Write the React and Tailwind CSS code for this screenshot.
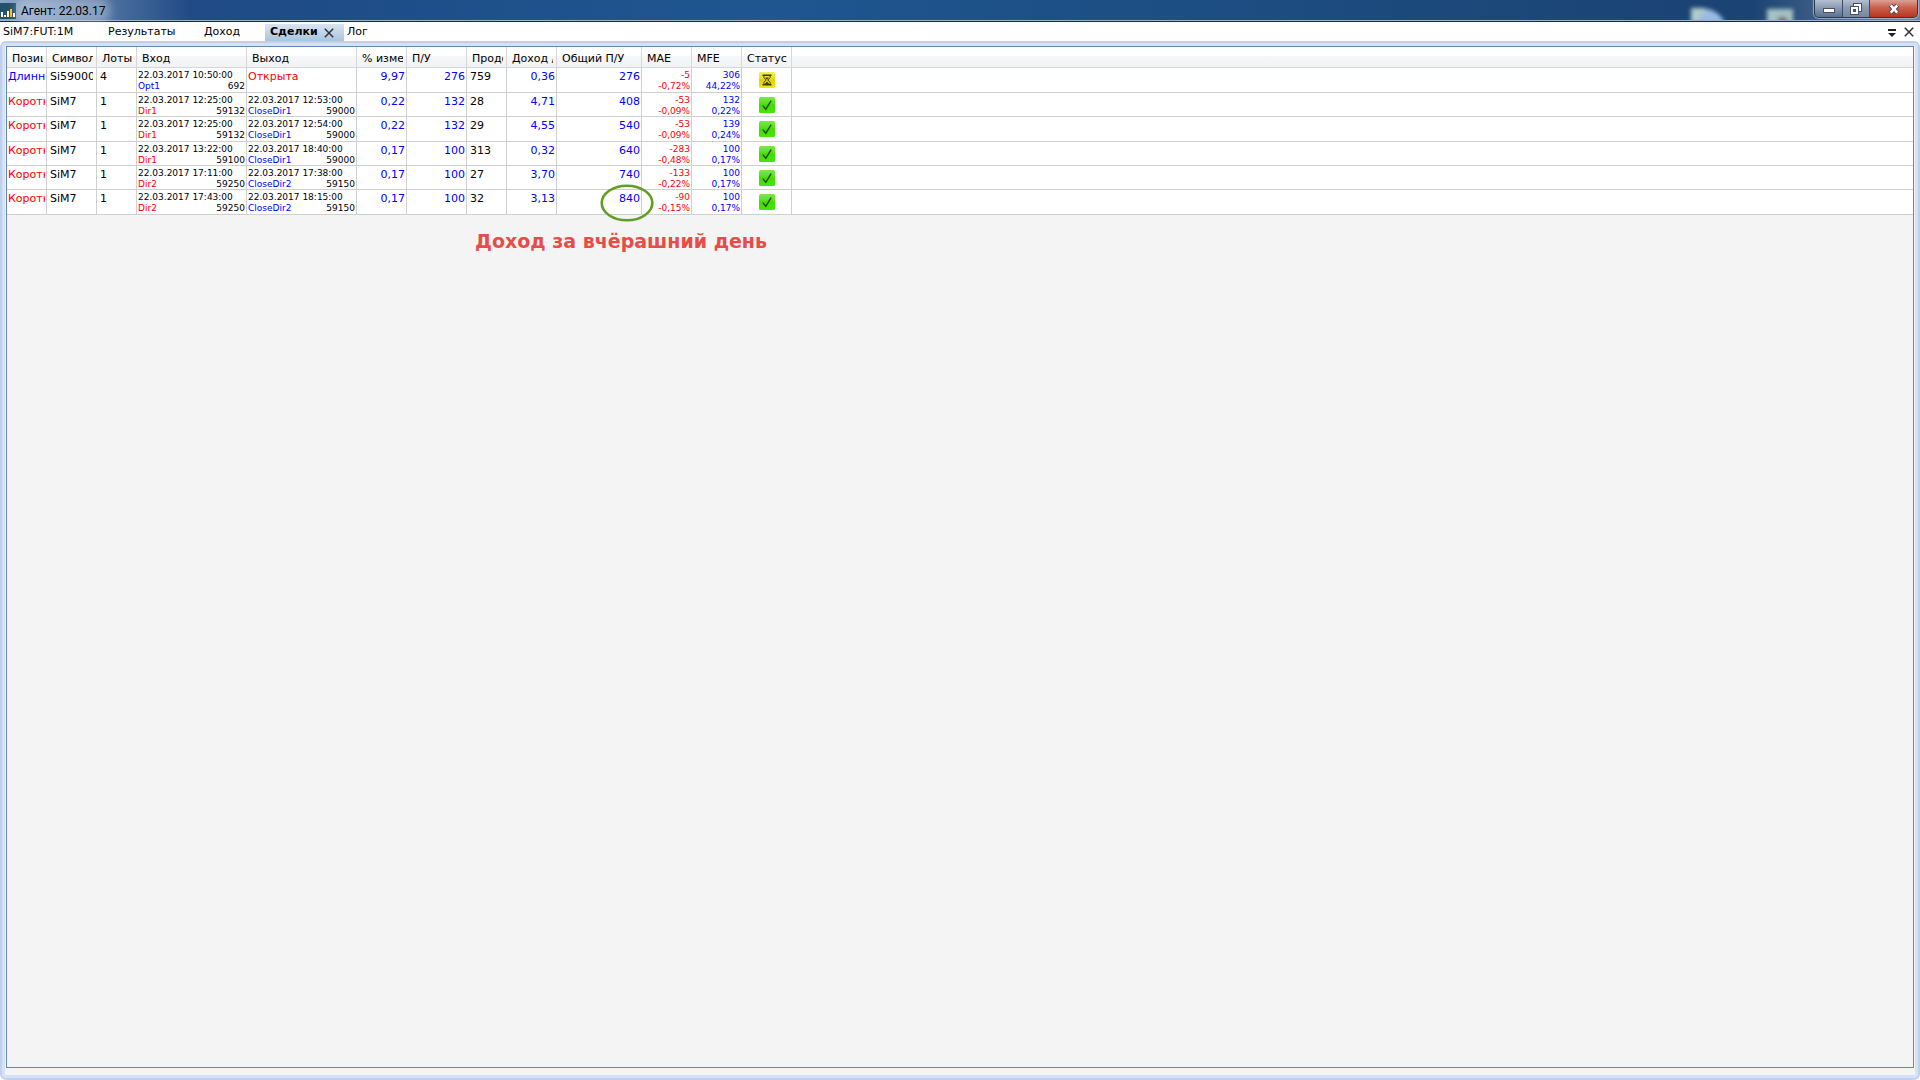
const COLUMNS = [
  { name: "Позиция", width: "w-[40px]" },
  { name: "Символ", width: "w-[50px]" },
  { name: "Лоты", width: "w-[40px]" },
  { name: "Вход", width: "w-[110px]" },
  { name: "Выход", width: "w-[110px]" },
  { name: "% изменения", width: "w-[50px]" },
  { name: "П/У", width: "w-[60px]" },
  { name: "Продолжительность", width: "w-[40px]" },
  { name: "Доход / бар", width: "w-[50px]" },
  { name: "Общий П/У", width: "w-[85px]" },
  { name: "MAE", width: "w-[50px]" },
  { name: "MFE", width: "w-[50px]" },
  { name: "Статус", width: "w-[50px]" },
];

const TRADES = [
  {
    long: true,
    symbol: "Si59000",
    lots: 4,
    entry: { time: "22.03.2017 10:50:00", signal: "Opt1", price: 692 },
    exit: null,
    change: "9,97",
    profit: 276,
    bars: 759,
    perBar: "0,36",
    total: 276,
    mae: [-5, "-0,72%"],
    mfe: [306, "44,22%"],
  },
  {
    symbol: "SiM7",
    lots: 1,
    entry: { time: "22.03.2017 12:25:00", signal: "Dir1", price: 59132 },
    exit: { time: "22.03.2017 12:53:00", signal: "CloseDir1", price: 59000 },
    change: "0,22",
    profit: 132,
    bars: 28,
    perBar: "4,71",
    total: 408,
    mae: [-53, "-0,09%"],
    mfe: [132, "0,22%"],
  },
  {
    symbol: "SiM7",
    lots: 1,
    entry: { time: "22.03.2017 12:25:00", signal: "Dir1", price: 59132 },
    exit: { time: "22.03.2017 12:54:00", signal: "CloseDir1", price: 59000 },
    change: "0,22",
    profit: 132,
    bars: 29,
    perBar: "4,55",
    total: 540,
    mae: [-53, "-0,09%"],
    mfe: [139, "0,24%"],
  },
  {
    symbol: "SiM7",
    lots: 1,
    entry: { time: "22.03.2017 13:22:00", signal: "Dir1", price: 59100 },
    exit: { time: "22.03.2017 18:40:00", signal: "CloseDir1", price: 59000 },
    change: "0,17",
    profit: 100,
    bars: 313,
    perBar: "0,32",
    total: 640,
    mae: [-283, "-0,48%"],
    mfe: [100, "0,17%"],
  },
  {
    symbol: "SiM7",
    lots: 1,
    entry: { time: "22.03.2017 17:11:00", signal: "Dir2", price: 59250 },
    exit: { time: "22.03.2017 17:38:00", signal: "CloseDir2", price: 59150 },
    change: "0,17",
    profit: 100,
    bars: 27,
    perBar: "3,70",
    total: 740,
    mae: [-133, "-0,22%"],
    mfe: [100, "0,17%"],
  },
  {
    symbol: "SiM7",
    lots: 1,
    entry: { time: "22.03.2017 17:43:00", signal: "Dir2", price: 59250 },
    exit: { time: "22.03.2017 18:15:00", signal: "CloseDir2", price: 59150 },
    change: "0,17",
    profit: 100,
    bars: 32,
    perBar: "3,13",
    total: 840,
    mae: [-90, "-0,15%"],
    mfe: [100, "0,17%"],
    marked: true,
  },
];

function AppLogo() {
  return (
    <svg className="w-4 h-4" viewBox="0 0 16 16" shapeRendering="crispEdges">
      <rect width="16" height="16" fill="#23506b" />
      <rect x="1" y="9" width="2" height="5" fill="#fff" />
      <rect x="4" y="12" width="2" height="2" fill="#fff" />
      <rect x="7" y="8" width="2" height="6" fill="#fff" />
      <rect x="10" y="6" width="2" height="8" fill="#fdc010" />
      <rect x="13" y="10" width="2" height="4" fill="#fff" />
    </svg>
  );
}

function CrossIcon() {
  return (
    <svg className="w-[10px] h-[10px]" viewBox="0 0 10 10">
      <path d="M.8.8 9.2 9.2M9.2.8.8 9.2" stroke="#333" strokeWidth="1.5" />
    </svg>
  );
}

function StatusIcon({ open }) {
  return (
    <svg className="w-4 h-4" viewBox="0 0 16 16">
      <defs>
        <linearGradient id="done" x1="0" y1="0" x2="0" y2="1">
          <stop offset="0" stopColor="#7be84a" />
          <stop offset="0.4" stopColor="#58e01c" />
          <stop offset="0.5" stopColor="#42dc00" />
          <stop offset="1" stopColor="#4ae40a" />
        </linearGradient>
        <linearGradient id="wait" x1="0" y1="0" x2="0" y2="1">
          <stop offset="0" stopColor="#f2ee5c" />
          <stop offset="0.4" stopColor="#e8e020" />
          <stop offset="0.5" stopColor="#dfd300" />
          <stop offset="1" stopColor="#f0e80a" />
        </linearGradient>
      </defs>
      <rect width="16" height="16" rx="1.5" fill={open ? "url(#wait)" : "url(#done)"} />
      {open ? (
        <g stroke="#3f3d0c" fill="none">
          <path d="M3.5 3.2h9M3.5 12.8h9" strokeWidth="1.4" />
          <path d="M4.9 4v1.6L7.2 8 4.9 10.4V12M11.1 4v1.6L8.8 8l2.3 2.4V12" />
          <path d="M6 5.5h4L8 7.6zM5.5 12.2 8 9.4l2.5 2.8z" fill="#3f3d0c" stroke="none" />
        </g>
      ) : (
        <path d="M3.8 8.6 6.8 12.2 12.2 3.6" fill="none" stroke="#1d4f0c" strokeWidth="1.4" />
      )}
    </svg>
  );
}

function DesktopGlow() {
  return (
    <svg className="absolute right-0 top-0 w-[320px] h-5" viewBox="0 0 320 20">
      <defs>
        <filter id="soft" x="-30%" y="-30%" width="160%" height="160%">
          <feGaussianBlur stdDeviation="2" />
        </filter>
        <linearGradient id="edge">
          <stop offset="0" stopColor="#8fa3bd" stopOpacity="0" />
          <stop offset="1" stopColor="#8fa3bd" stopOpacity="0.7" />
        </linearGradient>
      </defs>
      <rect x="150" width="170" height="20" fill="url(#edge)" />
      <g filter="url(#soft)" opacity="0.9">
        <path d="M91 9h17c9 2 14 8 17 14H91z" fill="#a9c9ee" />
        <path d="M91 8h14v6H91z" fill="#c4dcd0" />
        <path d="M91 12h8v10h-8z" fill="#c4dcd0" />
        <path d="M167 9h26v14h-26z" fill="#b4d0cc" />
        <path d="M178 17h9v5h-9z" fill="#7c5a62" />
      </g>
    </svg>
  );
}

function WindowButtons() {
  return (
    <div className="relative flex h-[18px] mr-[2px] rounded-b-[5px] border border-t-0 border-[#2a3850] overflow-hidden shadow-[0_0_1px_1px_rgba(190,205,225,0.7)]">
      <button
        aria-label="Свернуть"
        className="flex justify-center items-center w-[28px] border-r border-[#3c4c66] bg-linear-to-b from-[#b4c0d0] via-[#8b9bb2] via-45% to-[#5a7090]"
      >
        <svg className="w-3 h-3" viewBox="0 0 12 12" shapeRendering="crispEdges">
          <rect x="0" y="5" width="12" height="5" fill="#4a5266" />
          <rect x="1" y="6" width="10" height="3" fill="#fff" />
        </svg>
      </button>
      <button
        aria-label="Восстановить"
        className="flex justify-center items-center w-[27px] border-r border-[#3c4c66] bg-linear-to-b from-[#b4c0d0] via-[#8b9bb2] via-45% to-[#7488a4]"
      >
        <svg className="w-3 h-3" viewBox="0 0 12 12" shapeRendering="crispEdges">
          <path d="M3 0h9v9h-9z" fill="#4a5266" />
          <path d="M4 1h7v7h-7z" fill="#fff" />
          <path d="M0 3h9v9h-9z" fill="#4a5266" />
          <path d="M1 4h7v7h-7z" fill="#fff" />
          <path d="M3 6h3v3h-3z" fill="#4a5266" />
        </svg>
      </button>
      <button
        aria-label="Закрыть"
        className="flex justify-center items-center w-[47px] bg-linear-to-b from-[#dba096] via-[#c9604c] via-45% to-[#b8321a]"
      >
        <svg className="w-3 h-3" viewBox="0 0 12 12">
          <path d="M2.6 2.2 9.4 9.8M9.4 2.2 2.6 9.8" stroke="#4a4656" strokeWidth="4.6" />
          <path d="M2.8 2.4 9.2 9.6M9.2 2.4 2.8 9.6" stroke="#fff" strokeWidth="2.6" />
        </svg>
      </button>
    </div>
  );
}

function TitleBar() {
  return (
    <header className="relative flex items-start justify-between h-[22px] border-b border-[#14284a] bg-linear-to-r from-[#1f4682] via-[#1e568f] via-40% to-[#1a3f6e]">
      <div className="absolute inset-0 bg-linear-to-r from-[#8ba5c6] to-transparent to-10%" />
      <DesktopGlow />
      <div className="absolute inset-x-0 bottom-0 h-px bg-[#9db3d0]" />
      <div className="relative flex items-center gap-[5px] pt-[3px]">
        <AppLogo />
        <h1 className="font-[Roboto,sans-serif] text-[12px] leading-4 rounded-full bg-white/30 shadow-[0_0_8px_6px_rgba(255,255,255,0.3)]">
          Агент: 22.03.17
        </h1>
      </div>
      <WindowButtons />
    </header>
  );
}

function TabBar() {
  return (
    <nav className="flex justify-between h-[19px] bg-white text-[11px] leading-[18px]">
      <div className="flex">
        <button className="w-[105px] pl-[3px] text-left">SiM7:FUT:1M</button>
        <button className="w-[96px] pl-[3px] text-left">Результаты</button>
        <button className="w-[64px] pl-[3px] text-left">Доход</button>
        <div className="flex items-start justify-between w-[79px] pl-[5px] pr-[10px] mt-[2px] bg-linear-to-b from-[#d9e5f2] to-[#aac4de]">
          <button className="font-bold leading-4">Сделки</button>
          <button aria-label="Закрыть вкладку" className="pt-1">
            <CrossIcon />
          </button>
        </div>
        <button className="pl-[3px]">Лог</button>
      </div>
      <div className="flex items-start gap-2 pt-[5px] pr-[6px]">
        <button aria-label="Список вкладок">
          <svg className="w-2 h-[10px]" viewBox="0 0 8 10" fill="#222">
            <path d="M0 2h8v2H0zM0 6h8L4 10z" />
          </svg>
        </button>
        <button aria-label="Закрыть">
          <CrossIcon />
        </button>
      </div>
    </nav>
  );
}

function Deal({ deal, signalColor }) {
  return (
    <div className="h-[22px] px-px pt-px text-[9px] leading-[11px] whitespace-nowrap">
      <div>{deal.time}</div>
      <div className="flex justify-between">
        <span className={signalColor}>{deal.signal}</span>
        <span>{deal.price}</span>
      </div>
    </div>
  );
}

function Excursion({ values }) {
  return (
    <div className="h-[22px] pr-px pt-px text-right text-[9px] leading-[11px]">
      <div>{values[0]}</div>
      <div>{values[1]}</div>
    </div>
  );
}

function TradeRow({ trade }) {
  const cell = "border-r border-b border-[#d0d0d0] pt-px pb-0 align-top";
  const number = `${cell} text-right pr-px text-[#0000ff]`;
  const side = trade.long ? "text-[#0000ff]" : "text-[#ff0000]";

  return (
    <tr className="h-[24px] first:h-[25px] nth-3:h-[25px] last:h-[25px] bg-white">
      <td className={`${cell} px-px ${side}`}>
        <div className="overflow-hidden whitespace-nowrap">
          {trade.long ? "Длинная" : "Короткая"}
        </div>
      </td>
      <td className={`${cell} px-[3px]`}>
        <div className="overflow-hidden whitespace-nowrap">{trade.symbol}</div>
      </td>
      <td className={`${cell} pl-[3px]`}>{trade.lots}</td>
      <td className={cell}>
        <Deal deal={trade.entry} signalColor={side} />
      </td>
      <td className={cell}>
        {trade.exit ? (
          <Deal deal={trade.exit} signalColor="text-[#0000ff]" />
        ) : (
          <span className="pl-px text-[#ff0000]">Открыта</span>
        )}
      </td>
      <td className={number}>{trade.change}</td>
      <td className={number}>{trade.profit}</td>
      <td className={`${cell} pl-[3px]`}>{trade.bars}</td>
      <td className={number}>{trade.perBar}</td>
      <td className={`${number} relative`}>
        {trade.total}
        {trade.marked && (
          <svg className="absolute -top-[6px] -right-[13px] w-[54px] h-[38px]" viewBox="0 0 54 38">
            <ellipse cx="27" cy="19" rx="25.3" ry="17.3" fill="none" stroke="#5fa023" strokeWidth="2.6" />
          </svg>
        )}
      </td>
      <td className={`${cell} text-[#ff0000]`}>
        <Excursion values={trade.mae} />
      </td>
      <td className={`${cell} text-[#0000ff]`}>
        <Excursion values={trade.mfe} />
      </td>
      <td className={cell}>
        <div className="pl-[17px] pt-[3px]">
          <StatusIcon open={!trade.exit} />
        </div>
      </td>
      <td className="border-b border-[#d0d0d0]" />
    </tr>
  );
}

export default function App() {
  return (
    <div className="flex flex-col h-screen bg-white text-black font-['DejaVu_Sans',Verdana,sans-serif]">
      <TitleBar />
      <TabBar />
      <main className="flex flex-1 min-h-0 border-2 border-[#bfd0ee] rounded-md bg-[#d5e1f7]">
        <div className="flex flex-col flex-1 border-3 border-[#d5e1f7] rounded-sm px-px pb-[7px] bg-[#f4f4f4]">
          <section className="flex-1 border border-[#6488b0]">
            <table className="w-full table-fixed border-separate border-spacing-0 text-[11px] leading-4">
              <thead>
                <tr className="h-[21px] bg-linear-to-b from-white from-40% via-[#f6f7f8] via-45% to-[#f1f2f4]">
                  {COLUMNS.map((column) => (
                    <th
                      key={column.name}
                      className={`${column.width} border-r border-b border-[#d5d7da] pl-[5px] pr-[3px] pt-1 pb-0 text-left font-normal`}
                    >
                      <div className="overflow-hidden whitespace-nowrap">{column.name}</div>
                    </th>
                  ))}
                  <th className="border-b border-[#d5d7da]" />
                </tr>
              </thead>
              <tbody>
                {TRADES.map((trade) => (
                  <TradeRow key={trade.total} trade={trade} />
                ))}
              </tbody>
            </table>
            <p className="pl-[468px] pt-3 text-[19px] leading-7 font-bold text-[#e84c49]">
              Доход за вчёрашний день
            </p>
          </section>
        </div>
      </main>
    </div>
  );
}
